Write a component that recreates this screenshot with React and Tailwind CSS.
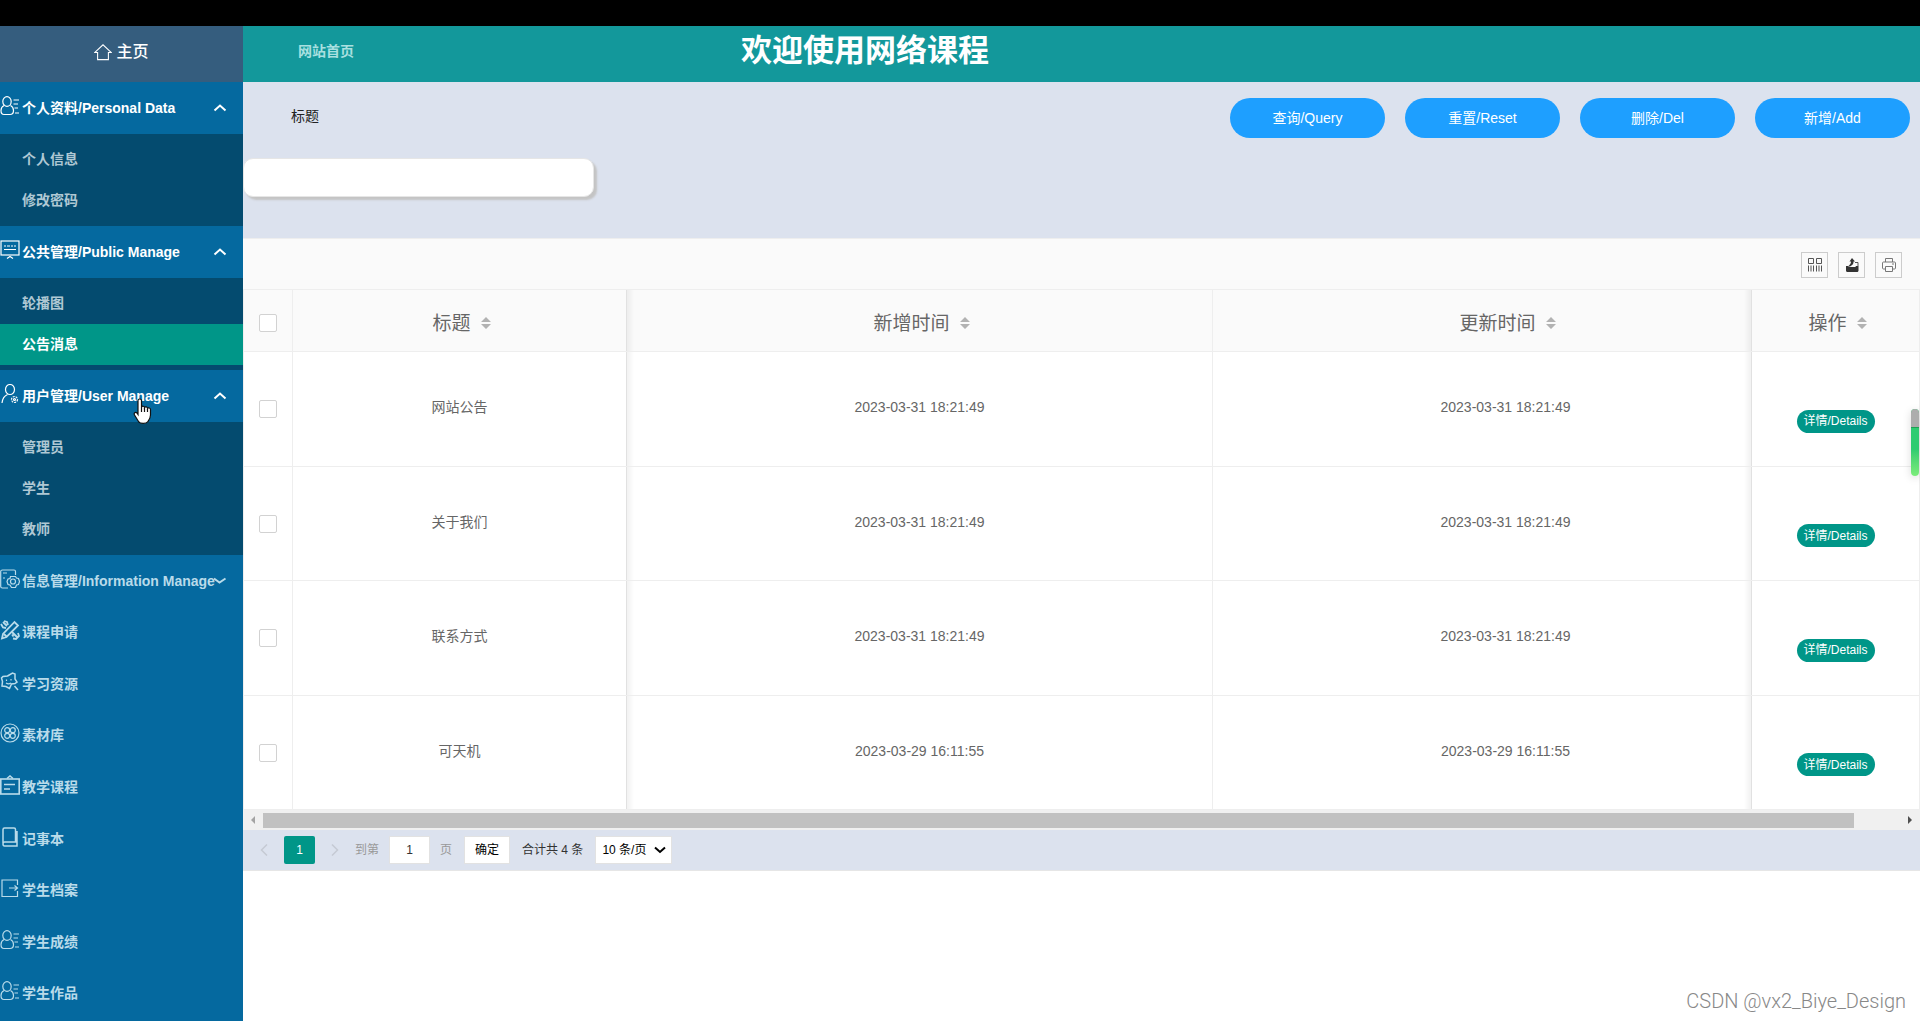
import { useState } from "react";
import clsx from "clsx";

const groups = [
  { label: "个人资料/Personal Data", icon: "user", items: ["个人信息", "修改密码"] },
  { label: "公共管理/Public Manage", icon: "board", items: ["轮播图", "公告消息"] },
  { label: "用户管理/User Manage", icon: "person", items: ["管理员", "学生", "教师"] },
];

const links = [
  { label: "信息管理/Information Manage", icon: "gear", arrow: true },
  { label: "课程申请", icon: "tools" },
  { label: "学习资源", icon: "star" },
  { label: "素材库", icon: "clover" },
  { label: "教学课程", icon: "case" },
  { label: "记事本", icon: "book" },
  { label: "学生档案", icon: "exit" },
  { label: "学生成绩", icon: "user" },
  { label: "学生作品", icon: "user" },
];

const rows = [
  { title: "网站公告", added: "2023-03-31 18:21:49", updated: "2023-03-31 18:21:49" },
  { title: "关于我们", added: "2023-03-31 18:21:49", updated: "2023-03-31 18:21:49" },
  { title: "联系方式", added: "2023-03-31 18:21:49", updated: "2023-03-31 18:21:49" },
  { title: "可天机", added: "2023-03-29 16:11:55", updated: "2023-03-29 16:11:55" },
];

const actions = ["查询/Query", "重置/Reset", "删除/Del", "新增/Add"];

const iconShapes = {
  user: (
    <>
      <ellipse cx="7" cy="5.5" rx="4.2" ry="4.8" />
      <path d="M4 9.500C2 10.500 1 12 1 14.500c0 2.800 1 4 3 4h6c2.500 0 3.500-1.500 3.500-4 0-2.500-1-4-3-5M13.500 4H19M13.500 8H18M14.500 12H18M15 17H19" />
    </>
  ),
  board: (
    <>
      <rect x="1" y="1" width="18" height="14" />
      <path d="M4 6h2M7 6h3M11 6h2M14 6h2M4 9.500h12M7 18.500l3-2 3 2" />
    </>
  ),
  person: (
    <>
      <ellipse cx="10" cy="5.500" rx="4.500" ry="5" />
      <path d="M7.500 10.500C4 12 2.500 14 2 19" />
      <circle cx="14.500" cy="15.500" r="3" strokeDasharray="2 1" />
      <circle cx="14.500" cy="15.500" r="1" />
    </>
  ),
  gear: (
    <>
      <path d="M15.500 6V2.500c0-1-.5-1.500-1.500-1.500H2.500C1.500 1 .7 1.500.7 2.500v15c0 1 .8 1.500 1.800 1.500H8M3 4h4M3 9h2" />
      <path d="M10.500 7.500h5l1 1.500 2 .5 1 3-1 3-2 .5-1 2.500h-4l-1.500-2.500-2-.5-1-3 1-2.500 2-.5z" />
      <circle cx="13" cy="12.500" r="2.500" />
    </>
  ),
  tools: (
    <>
      <path d="M2 18.500l1-4.500L14.500 2l3.500 3.500L6.500 17z" strokeWidth="1.800" />
      <path d="M4 1l3 1 1 3M1 4l2 3.500 3 .5M3 2l4 4M12 12l5 5M13 18.500l3 .5 3-3-1-3M12 14.500l1.500 2M4 14l2.500 2.500" strokeWidth="1.800" />
    </>
  ),
  star: (
    <>
      <path d="M7.500 4l5-3 2.500 1v5l2 3-2 1.500-3.500.5-2 4.500-3.500-2-4-.5.500-4.500-1-3.500 1.500-1.500zM14.500 14l3.500 4" strokeWidth="1.500" />
      <path d="M6.500 7.500V9M11 7v1.500M6 11c1.500 1 3.500 1 5 0" />
    </>
  ),
  clover: (
    <>
      <circle cx="10" cy="10" r="9" />
      <circle cx="7.200" cy="7.200" r="2.500" />
      <circle cx="12.800" cy="7.200" r="2.500" />
      <circle cx="7.200" cy="12.800" r="2.500" />
      <circle cx="12.800" cy="12.800" r="2.500" />
    </>
  ),
  case: (
    <>
      <rect x="0.800" y="4" width="18.400" height="15" strokeWidth="1.600" />
      <path d="M7 3.500l3-2.500 3 2.500M4 9.500h11M4 14h6" strokeWidth="1.600" />
    </>
  ),
  book: (
    <path d="M3 16V2.500C3 1.500 3.500 1 4.500 1H14c1 0 1.500.5 1.500 1.500V15H4.500C3.500 15 3 15.500 3 17s.5 2 1.500 2H17V4" strokeWidth="1.500" />
  ),
  exit: <path d="M17.500 7V2H2v16.500h15.500V13M9 10h8M14.500 7.500L17.500 10l-3 2.500" />,
  home: <path d="M1 10.500L10 2l9 8.500h-3V18.500H4V10.500z" />,
};

function Icon({ name, className }) {
  return (
    <svg
      viewBox="0 0 20 20"
      fill="none"
      stroke="currentColor"
      strokeWidth="1.200"
      className={clsx("shrink-0", className)}
      aria-hidden="true"
    >
      {iconShapes[name]}
    </svg>
  );
}

function Chevron({ down }) {
  return (
    <svg viewBox="0 0 14 8" className="h-2 w-3.5" fill="none" stroke="currentColor" strokeWidth="2" aria-hidden="true">
      <path d={down ? "M1 1.500l5.500 4 6-4" : "M1.500 6.500l5.500-5 5.500 5"} />
    </svg>
  );
}

function Sidebar() {
  const [active, setActive] = useState("公告消息");

  return (
    <aside className="flex w-[243px] shrink-0 flex-col bg-[#05699f] text-sm font-bold">
      <a href="#home" className="flex h-14 items-center justify-center gap-1 bg-[#355d7e] pb-1 text-base font-medium text-white">
        <Icon name="home" className="size-[18px]" />
        主页
      </a>
      <nav className="flex flex-1 flex-col pb-0.5 text-[#b9dbea]">
        {groups.map((group) => (
          <div key={group.label}>
            <button type="button" className="flex h-[52px] w-full items-center text-white">
              <Icon name={group.icon} className="mb-1 size-5" />
              <span className="pl-0.5 whitespace-nowrap">{group.label}</span>
              <span className="mr-4 ml-auto">
                <Chevron />
              </span>
            </button>
            <ul className="bg-[#044b6f] py-[5px]">
              {group.items.map((item) => (
                <li key={item}>
                  <a
                    href="#page"
                    onClick={() => setActive(item)}
                    className={clsx(
                      "flex h-[41px] items-center pb-0.5 pl-[22px]",
                      item === active ? "bg-[#009688] text-white" : "text-[#afc8d4]"
                    )}
                  >
                    {item}
                  </a>
                </li>
              ))}
            </ul>
          </div>
        ))}
        <ul className="grid flex-1 auto-rows-fr">
          {links.map((link) => (
            <li key={link.label} className="relative">
              <a href="#page" className="flex h-full items-center">
                <Icon name={link.icon} className="mb-1 size-5" />
                <span className="pl-0.5 whitespace-nowrap">{link.label}</span>
              </a>
              {link.arrow && (
                <span className="absolute inset-y-0 right-4 flex items-center">
                  <Chevron down />
                </span>
              )}
            </li>
          ))}
        </ul>
      </nav>
    </aside>
  );
}

function SearchPanel() {
  return (
    <form className="flex h-[156px] items-start justify-between bg-[#dce2ee]">
      <div className="flex flex-col">
        <label htmlFor="title" className="flex h-[68px] items-center pl-12 text-sm text-[#222]">
          标题
        </label>
        <input
          id="title"
          className="mt-2 h-[39px] w-[351px] rounded-[10px] border border-[#e6e6e6] bg-white px-3 text-sm shadow-[3px_3px_2px_#c4c4c4] outline-none"
        />
      </div>
      <div className="flex gap-5 pt-4 pr-2.5">
        {actions.map((action) => (
          <button key={action} type="button" className="h-10 w-[155px] rounded-full bg-[#1e9fff] text-sm text-white">
            {action}
          </button>
        ))}
      </div>
    </form>
  );
}

function TableTools() {
  const box = "flex h-[26px] w-[27px] items-center justify-center border border-[#ccc] text-[#555]";
  return (
    <div className="flex h-[51px] items-center justify-end gap-2.5 border-t border-[#eee] bg-[#fafafa] pt-0.5 pr-[18px]">
      <button type="button" aria-label="筛选列" className={box}>
        <svg viewBox="0 0 16 16" className="size-4" fill="none" stroke="currentColor">
          <path d="M1.500 1.500h5v5h-5zM9.500 1.500h5v5h-5zM1.500 8.500v6M4 8.500v6M6.500 8.500v6M9.500 8.500v6M12 8.500v6M14.500 8.500v6" />
        </svg>
      </button>
      <button type="button" aria-label="导出" className={box}>
        <svg viewBox="0 0 16 16" className="size-4" fill="#333">
          <path d="M2 9h2l1 1.500h6L12 9h2.500v4.500c0 .8-.5 1.500-1.500 1.500H3.500C2.500 15 2 14.300 2 13.500zM8 1l3 3.500H9.500C9.500 6.500 9 8 6 9.500H4C6.500 7.500 7 6 7 4.500H5.500z" />
          <path d="M3 10h11v3H3z" />
          <path d="M11 5.500h3V9" fill="none" stroke="#555" />
        </svg>
      </button>
      <button type="button" aria-label="打印" className={box}>
        <svg viewBox="0 0 16 16" className="size-4" fill="none" stroke="#777">
          <path d="M4.500 5V1.500h7V5M4.500 12H2.500c-.6 0-1-.4-1-1V6c0-.6.4-1 1-1h11c.6 0 1 .4 1 1v5c0 .6-.4 1-1 1h-2M4.500 9.500h7v5h-7zM11 7h2" />
        </svg>
      </button>
    </div>
  );
}

function SortHead({ label }) {
  return (
    <button type="button" className="inline-flex items-center gap-2.5 pt-1.5 pl-1">
      {label}
      <svg viewBox="0 0 10 12" className="h-3 w-2.5" fill="#b2b2b2" aria-hidden="true">
        <path d="M5 0l5 5H0zM5 12l5-5H0z" />
      </svg>
    </button>
  );
}

function Check({ label }) {
  return (
    <input
      type="checkbox"
      aria-label={label}
      className="block size-[18px] appearance-none rounded-xs border border-[#d2d2d2] bg-white checked:bg-[#009688]"
    />
  );
}

function NoticeTable() {
  const line = "border-b border-[#eee]";
  const fixedTitle =
    "sticky left-[49px] z-10 border-r after:absolute after:inset-y-0 after:left-full after:w-2 after:bg-gradient-to-r after:from-black/6 after:to-transparent";
  const fixedActions =
    "sticky right-0 z-10 border-l before:absolute before:inset-y-0 before:right-full before:w-2 before:bg-gradient-to-l before:from-black/6 before:to-transparent";

  return (
    <div className="overflow-hidden border-x border-t border-[#eee]">
      <table className="w-full min-w-[1723px] table-fixed border-separate border-spacing-0 text-center text-sm text-[#666]">
        <colgroup>
          <col className="w-[49px]" />
          <col className="w-[334px]" />
          <col />
          <col />
          <col className="w-[168px]" />
        </colgroup>
        <thead className="text-[19px]">
          <tr className="h-[62px]">
            <th className={clsx(line, "sticky left-0 z-20 border-r bg-[#fafafa] pt-1 pl-[15px]")}>
              <Check label="全选" />
            </th>
            <th className={clsx(line, fixedTitle, "bg-[#fafafa] font-normal")}>
              <SortHead label="标题" />
            </th>
            <th className={clsx(line, "border-r bg-[#fafafa] font-normal")}>
              <SortHead label="新增时间" />
            </th>
            <th className={clsx(line, "border-r bg-[#fafafa] font-normal")}>
              <SortHead label="更新时间" />
            </th>
            <th className={clsx(line, fixedActions, "bg-[#fafafa] font-normal")}>
              <SortHead label="操作" />
            </th>
          </tr>
        </thead>
        <tbody>
          {rows.map((row) => (
            <tr key={row.title} className="odd:h-[115px] even:h-[114px]">
              <td className={clsx(line, "sticky left-0 z-20 border-r bg-white pl-[15px]")}>
                <Check label={row.title} />
              </td>
              <td className={clsx(line, fixedTitle, "bg-white pb-1")}>{row.title}</td>
              <td className={clsx(line, "border-r pb-1")}>{row.added}</td>
              <td className={clsx(line, "border-r pb-1")}>{row.updated}</td>
              <td className={clsx(line, fixedActions, "bg-white pt-6")}>
                <button type="button" className="block mx-auto h-[23px] w-[78px] rounded-full bg-[#009688] text-xs text-white">
                  详情/Details
                </button>
              </td>
            </tr>
          ))}
        </tbody>
      </table>
    </div>
  );
}

function ScrollTrack() {
  return (
    <div className="flex h-5 items-center bg-[#f0f0f0] px-[7px]">
      <svg viewBox="0 0 6 8" className="h-2 w-1.5" fill="#a3a3a3">
        <path d="M5 0v8L1 4z" />
      </svg>
      <div className="mr-1 ml-[7px] flex-1">
        <div className="h-[15px] w-[97%] bg-[#c1c1c1]" />
      </div>
      <svg viewBox="0 0 6 8" className="h-2 w-1.5" fill="#505050">
        <path d="M1 0v8l4-4z" />
      </svg>
    </div>
  );
}

function Pager() {
  return (
    <div className="flex h-[41px] items-center border-b border-[#e6e6e6] bg-[#dce2ee] pl-[17px] text-xs text-[#333]">
      <button type="button" aria-label="上一页" className="text-[#c5cad3]">
        <svg viewBox="0 0 8 12" className="h-3 w-2" fill="none" stroke="currentColor" strokeWidth="1.500">
          <path d="M7 .5L1.500 6 7 11.500" />
        </svg>
      </button>
      <button type="button" className="ml-4 h-7 w-[31px] rounded-xs bg-[#009688] text-white">
        1
      </button>
      <button type="button" aria-label="下一页" className="ml-4 text-[#c5cad3]">
        <svg viewBox="0 0 8 12" className="h-3 w-2" fill="none" stroke="currentColor" strokeWidth="1.500">
          <path d="M1 .5L6.500 6 1 11.500" />
        </svg>
      </button>
      <label htmlFor="page" className="ml-4 text-[#999]">
        到第
      </label>
      <input
        id="page"
        defaultValue="1"
        className="ml-2.5 h-7 w-[41px] border border-[#e2e2e2] bg-white text-center outline-none"
      />
      <span className="ml-2.5 text-[#999]">页</span>
      <button type="button" className="ml-3 h-7 w-[46px] border border-[#e2e2e2] bg-white text-black">
        确定
      </button>
      <span className="ml-3">合计共 4 条</span>
      <div className="relative ml-3">
        <select aria-label="每页条数" className="h-7 w-[77px] appearance-none border border-[#e2e2e2] bg-white pl-1.5 text-black outline-none">
          <option>10 条/页</option>
        </select>
        <svg viewBox="0 0 12 8" className="pointer-events-none absolute top-2.5 right-1.5 h-2 w-3" fill="none" stroke="#000" strokeWidth="2">
          <path d="M1 1.500l5 4.500 5-4.500" />
        </svg>
      </div>
    </div>
  );
}

export default function App() {
  return (
    <div className="relative flex min-h-screen flex-col overflow-hidden bg-white font-['Liberation_Sans','Noto_Sans_CJK_SC',sans-serif]">
      <div className="h-[26px] bg-black" />
      <div className="flex flex-1">
        <Sidebar />
        <main className="min-w-0 flex-1">
          <header className="grid h-14 grid-cols-[498px_1fr] items-center bg-[#13989b] pb-1.5">
            <a href="#site" className="pl-[55px] text-sm font-bold text-[#a9e0e0]">
              网站首页
            </a>
            <h1 className="text-[31px] leading-10 font-bold whitespace-nowrap text-white">欢迎使用网络课程</h1>
          </header>
          <SearchPanel />
          <TableTools />
          <NoticeTable />
          <ScrollTrack />
          <Pager />
        </main>
      </div>

      {/* page scroll marker */}
      <div className="absolute top-[409px] right-px z-30 h-[67px] w-2 overflow-hidden rounded-full bg-gradient-to-b from-[#2ecc71] from-60% to-[#7bed7b] shadow-[0_2px_8px_rgba(0,0,0,0.15)]">
        <div className="h-[19px] border-b border-[#1fa055] bg-[#adadad]" />
      </div>

      {/* mouse pointer */}
      <svg viewBox="0 0 20 27" className="absolute top-[398px] left-[133px] h-[27px] w-5" fill="#fff" stroke="#111" strokeWidth="1.200">
        <path d="M5 2.500C5 .5 8.500.5 8.500 2.500V9c.5-1.200 3-1 3 .5.7-1 3-.8 3 .8.800-.8 3-.5 3 1.200V17c0 3-1.500 5-2.500 6.500-1.500 2.500-8 2.500-9.500 0L1.500 17c-1-2 .8-3.500 2.500-2l1 1.500z" />
        <path d="M8.500 9v5M11.500 10v4M14.500 11v3" />
      </svg>

      <p className="absolute right-3.5 bottom-1.5 font-[Roboto,sans-serif] text-xl font-light text-[#888]">CSDN @vx2_Biye_Design</p>
    </div>
  );
}
